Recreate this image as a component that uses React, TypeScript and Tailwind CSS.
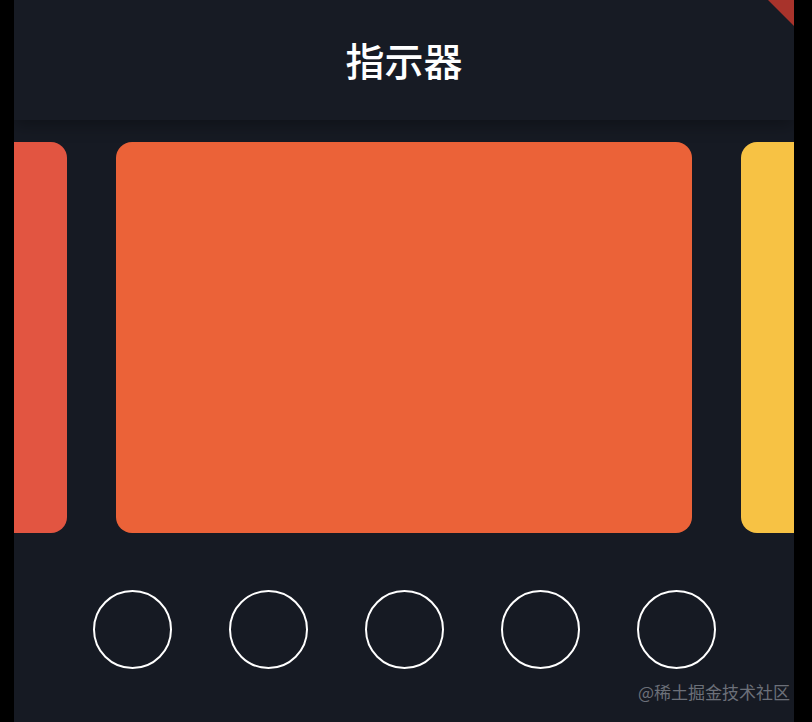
import React from "react";

const cards = [
  { id: "a", color: "bg-[#e25541]" },
  { id: "b", color: "bg-[#eb6238]" },
  { id: "c", color: "bg-[#f7c244]" },
];

const dots = [0, 1, 2, 3, 4];

const App = () => {
  return (
    <div className="flex h-[722px] w-[812px] bg-black font-['Noto_Sans_CJK_SC',sans-serif]">
      <div className="w-[14px] shrink-0" />
      <div className="relative flex w-[780px] shrink-0 flex-col overflow-hidden bg-[#161a23]">
        <div className="relative z-10 flex h-[120px] items-center justify-center bg-[#171b24] pb-[2px] shadow-[0_5px_16px_rgba(0,0,0,0.3)]">
          <h1 className="text-[39px] font-medium leading-none text-white">指示器</h1>
        </div>
        <div className="mt-[22px] flex h-[391px] justify-center gap-[49px] overflow-hidden">
          {cards.map((card) => (
            <div
              key={card.id}
              className={`h-full w-[576px] shrink-0 rounded-[16px] ${card.color}`}
            />
          ))}
        </div>
        <div className="mt-[57px] flex justify-center gap-[57px]">
          {dots.map((d) => (
            <div
              key={d}
              className="h-[79px] w-[79px] rounded-full border-2 border-white"
            />
          ))}
        </div>
        <div className="absolute right-[4px] top-[679px] text-[17px] text-[#6c7079]">
          @稀土掘金技术社区
        </div>
        <div className="absolute right-0 top-0 z-20 h-0 w-0 border-l-[26px] border-t-[26px] border-l-transparent border-t-[#a8332b]" />
      </div>
      <div className="w-[18px] shrink-0" />
    </div>
  );
};

export default App;
